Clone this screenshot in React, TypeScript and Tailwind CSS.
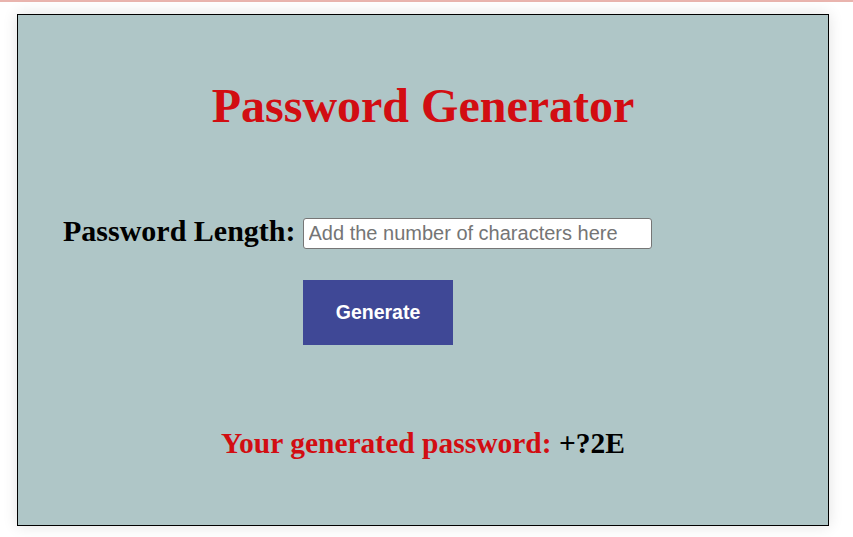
export default function App() {
  return (
    <div className="min-h-[537px] bg-white">
      <div className="h-[2px] bg-[#e9b4ae]" />
      <div className="ml-[17px] mt-[12px] w-[812px] h-[512px] border border-black bg-[#afc6c7] shadow-[0_0_14px_rgba(0,0,0,0.12)] font-['Liberation_Serif',serif]">
        <h1 className="mt-[63px] text-center text-[48px] leading-[55px] font-bold text-[#d20d12]">
          Password Generator
        </h1>

        <div className="mt-[82px] flex items-start pl-[45px]">
          <label className="text-[30px] leading-[32px] font-bold text-black">
            Password Length:
          </label>
          <input
            type="text"
            placeholder="Add the number of characters here"
            className="ml-[7px] mt-[3px] h-[31px] w-[349px] rounded-[3px] border border-[#767676] bg-white px-[5px] text-[20px] font-['Liberation_Sans',sans-serif] placeholder:text-[#757575] outline-none"
          />
        </div>

        <button className="ml-[285px] mt-[31px] h-[65px] w-[150px] bg-[#3f4896] text-[19.5px] font-bold text-white font-['Liberation_Sans',sans-serif]">
          Generate
        </button>

        <p className="mt-[82px] text-center text-[29.5px] leading-[32px] font-bold text-[#d20d12]">
          Your generated password: <span className="text-black">+?2E</span>
        </p>
      </div>
    </div>
  )
}
